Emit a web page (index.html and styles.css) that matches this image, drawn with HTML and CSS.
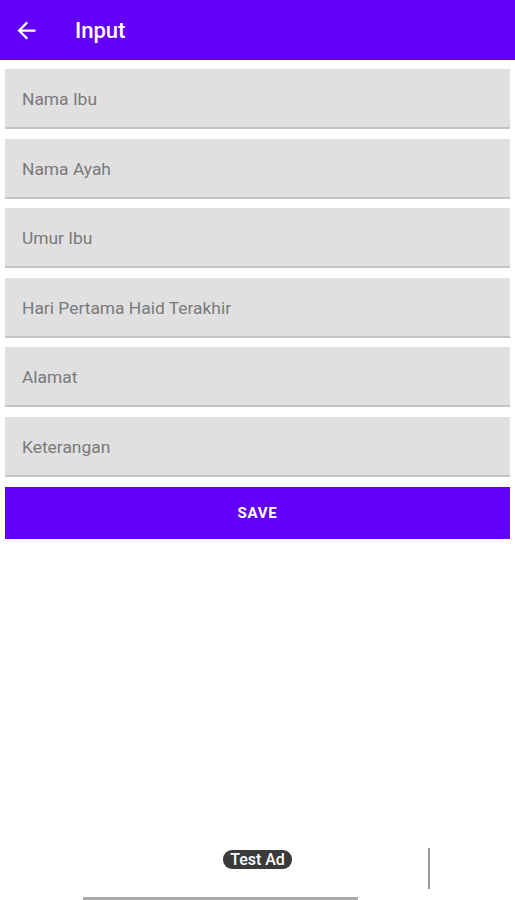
FILE: index.html
```html
<!DOCTYPE html>
<html lang="en">

<head>
    <meta charset="UTF-8">
    <meta name="viewport" content="width=device-width, initial-scale=1.0">
    <title>Input</title>
    <link rel="stylesheet" href="styles.css">
</head>

<body>
    <div class="toolbar">
        <svg class="back" width="27" height="27" viewBox="0 0 24 24">
            <path d="M20 11H7.83l5.59-5.59L12 4l-8 8 8 8 1.41-1.41L7.83 13H20v-2z" fill="#fff"/>
        </svg>
        <span class="title">Input</span>
    </div>

    <div class="form">
        <div class="field">Nama Ibu</div>
        <div class="field">Nama Ayah</div>
        <div class="field">Umur Ibu</div>
        <div class="field">Hari Pertama Haid Terakhir</div>
        <div class="field">Alamat</div>
        <div class="field">Keterangan</div>
        <div class="btn">SAVE</div>
    </div>

    <div class="ad">
        <span class="badge">Test Ad</span>
        <i class="vline"></i>
        <i class="hline"></i>
    </div>
</body>

</html>
```

FILE: styles.css
```css
* {
    padding: 0;
    margin: 0;
    box-sizing: border-box;
}

body {
    width: 515px;
    height: 900px;
    background: #fff;
    font-family: Roboto, "Liberation Sans", sans-serif;
    position: relative;
    overflow: hidden;
}

.toolbar {
    height: 60px;
    background: #6200f8;
    display: flex;
    align-items: center;
    padding-left: 13px;
}

.back {
    margin-top: 0;
}

.title {
    color: #fff;
    font-size: 22px;
    font-weight: 500;
    margin-left: 35px;
    margin-top: 1px;
}

.form {
    padding: 9px 5px 0;
    display: flex;
    flex-direction: column;
    gap: 9.6px;
}

.field {
    height: 60px;
    background: #e0e0e0;
    border-bottom: 2px solid #c4c4c4;
    color: #7a7a7a;
    font-size: 17.4px;
    padding-left: 17px;
    display: flex;
    align-items: center;
    padding-top: 2px;
}

.btn {
    height: 52px;
    background: #6200f8;
    color: #fff;
    font-size: 15px;
    font-weight: 700;
    letter-spacing: 0.8px;
    display: flex;
    align-items: center;
    justify-content: center;
}

.ad .badge {
    position: absolute;
    left: 223px;
    top: 850px;
    width: 69px;
    height: 19px;
    background: #3a3a3a;
    border-radius: 9px;
    color: #fff;
    font-size: 16px;
    font-weight: 500;
    display: flex;
    align-items: center;
    justify-content: center;
}

.ad .vline {
    position: absolute;
    left: 428px;
    top: 848px;
    width: 2px;
    height: 41px;
    background: #999;
}

.ad .hline {
    position: absolute;
    left: 83px;
    top: 897px;
    width: 275px;
    height: 3px;
    background: #aaa;
}
```
